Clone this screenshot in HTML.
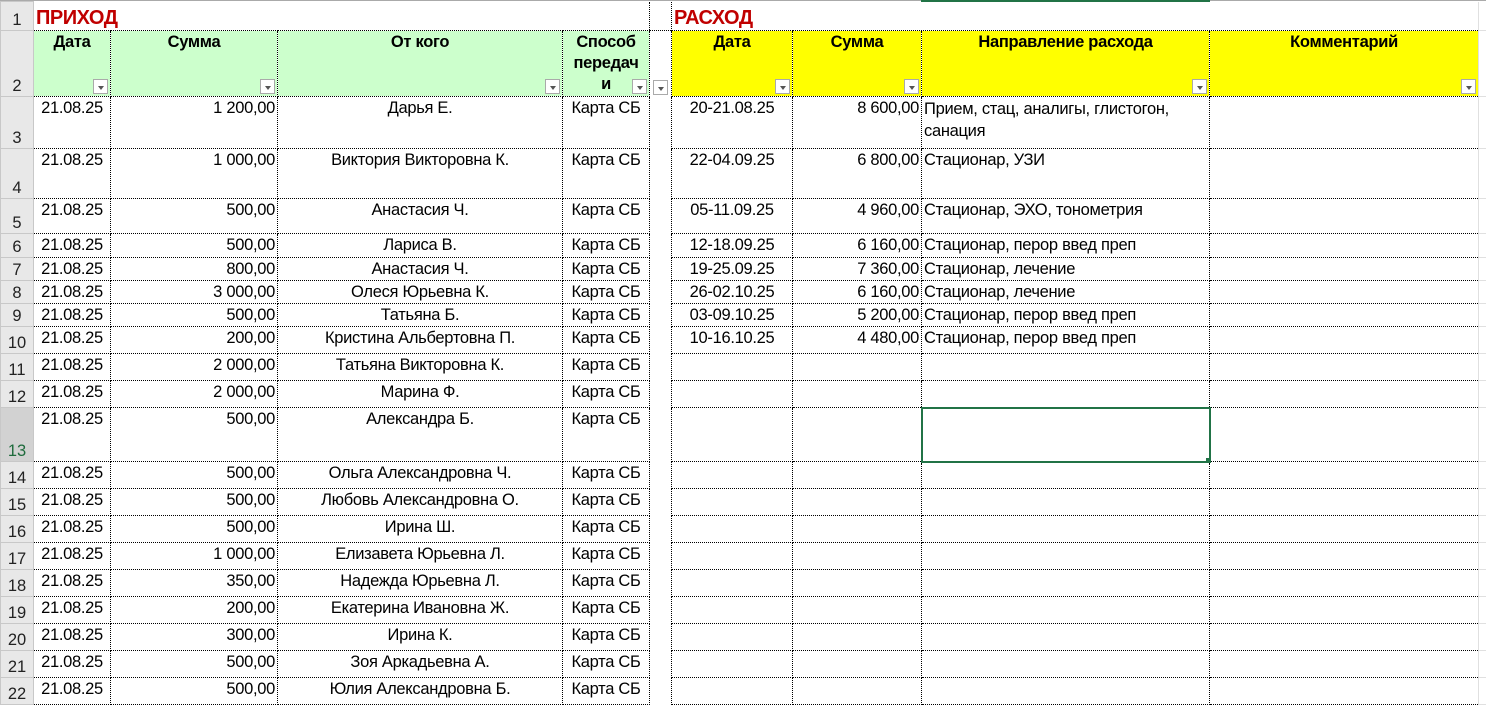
<!DOCTYPE html>
<html><head><meta charset="utf-8"><style>
body{margin:0;background:#fff;width:1486px;height:683px;overflow:hidden;position:relative;font-family:"Liberation Sans",Arial,sans-serif;font-size:16.5px;color:#000}
table{border-collapse:collapse;table-layout:fixed;position:absolute;left:0;top:1px;width:1486px}
td{padding:1px 2px 0 2px;vertical-align:top;white-space:nowrap;overflow:hidden;border:1px dotted #000;line-height:20px;position:relative;letter-spacing:-0.3px}
td.rh{background:#e8e8e8;border:1px solid #c8c8c8;text-align:center;vertical-align:bottom;padding:0;color:#222;letter-spacing:0}
td.sel{background:#d2d2d2;color:#1e6b3c}
td.f{border-top:none;border-bottom:none;border-right:none}
td.e{border:1px solid #e0e0e0}
td.c{text-align:center}td.r{text-align:right}
tr.h td{font-weight:bold;text-align:center}
.g{background:#ccffcc}.y{background:#ffff00}
.fb{position:absolute;right:2px;bottom:2px;width:15px;height:15px;background:#fff;border:1px solid #aaa;box-sizing:border-box}
.fb:after{content:"";position:absolute;left:4px;top:6px;border-left:3px solid transparent;border-right:3px solid transparent;border-top:4px solid #555}
.t{color:#c00000;font-weight:bold;font-size:20px;letter-spacing:-0.5px}
td.n1{border-top:none;border-right:none;border-left:none;vertical-align:bottom;padding-bottom:1px}
</style></head><body>
<div style="position:absolute;left:0;top:0;width:1486px;height:1px;background:#aaa"></div>
<div style="position:absolute;left:921px;top:0;width:289px;height:2px;background:#217346;z-index:2"></div>
<table>
<colgroup><col style="width:33px"><col style="width:77px"><col style="width:167px"><col style="width:285px"><col style="width:87px"><col style="width:22px"><col style="width:121px"><col style="width:129px"><col style="width:288px"><col style="width:269px"><col style="width:8px"></colgroup>
<tr style="height:29px"><td class="rh">1</td><td class="n1" colspan="4" style="border-bottom:1px dotted #000"><span class="t">ПРИХОД</span></td><td class="f"></td><td class="n1" colspan="4" style="border-left:1px dotted #000"><span class="t">РАСХОД</span></td><td class="e" style="border-top:none"></td></tr>
<tr class="h" style="height:66px"><td class="rh" style="font-weight:normal">2</td>
<td class="g">Дата<span class="fb"></span></td><td class="g">Сумма<span class="fb"></span></td><td class="g">От кого<span class="fb"></span></td><td class="g" style="line-height:21px">Способ<br>передач<br>и<span class="fb"></span></td><td class="f" style="border-top:1px dotted #000"><span class="fb" style="right:3px"></span></td>
<td class="y">Дата<span class="fb"></span></td><td class="y">Сумма<span class="fb"></span></td><td class="y">Направление расхода<span class="fb"></span></td><td class="y">Комментарий<span class="fb"></span></td><td class="e"></td></tr>
<tr style="height:52px"><td class="rh">3</td><td class="c">21.08.25</td><td class="r">1 200,00</td><td class="c">Дарья Е.</td><td class="c">Карта СБ</td><td class="f"></td><td class="c">20-21.08.25</td><td class="r">8 600,00</td><td style="white-space:normal;line-height:22px">Прием, стац, аналигы, глистогон, санация</td><td></td><td class="e"></td></tr>
<tr style="height:50px"><td class="rh">4</td><td class="c">21.08.25</td><td class="r">1 000,00</td><td class="c">Виктория Викторовна К.</td><td class="c">Карта СБ</td><td class="f"></td><td class="c">22-04.09.25</td><td class="r">6 800,00</td><td>Стационар, УЗИ</td><td></td><td class="e"></td></tr>
<tr style="height:35px"><td class="rh">5</td><td class="c">21.08.25</td><td class="r">500,00</td><td class="c">Анастасия Ч.</td><td class="c">Карта СБ</td><td class="f"></td><td class="c">05-11.09.25</td><td class="r">4 960,00</td><td>Стационар, ЭХО, тонометрия</td><td></td><td class="e"></td></tr>
<tr style="height:24px"><td class="rh">6</td><td class="c">21.08.25</td><td class="r">500,00</td><td class="c">Лариса В.</td><td class="c">Карта СБ</td><td class="f"></td><td class="c">12-18.09.25</td><td class="r">6 160,00</td><td>Стационар, перор введ преп</td><td></td><td class="e"></td></tr>
<tr style="height:23px"><td class="rh">7</td><td class="c">21.08.25</td><td class="r">800,00</td><td class="c">Анастасия Ч.</td><td class="c">Карта СБ</td><td class="f"></td><td class="c">19-25.09.25</td><td class="r">7 360,00</td><td>Стационар, лечение</td><td></td><td class="e"></td></tr>
<tr style="height:23px"><td class="rh">8</td><td class="c">21.08.25</td><td class="r">3 000,00</td><td class="c">Олеся Юрьевна К.</td><td class="c">Карта СБ</td><td class="f"></td><td class="c">26-02.10.25</td><td class="r">6 160,00</td><td>Стационар, лечение</td><td></td><td class="e"></td></tr>
<tr style="height:23px"><td class="rh">9</td><td class="c">21.08.25</td><td class="r">500,00</td><td class="c">Татьяна Б.</td><td class="c">Карта СБ</td><td class="f"></td><td class="c">03-09.10.25</td><td class="r">5 200,00</td><td>Стационар, перор введ преп</td><td></td><td class="e"></td></tr>
<tr style="height:27px"><td class="rh">10</td><td class="c">21.08.25</td><td class="r">200,00</td><td class="c">Кристина Альбертовна П.</td><td class="c">Карта СБ</td><td class="f"></td><td class="c">10-16.10.25</td><td class="r">4 480,00</td><td>Стационар, перор введ преп</td><td></td><td class="e"></td></tr>
<tr style="height:27px"><td class="rh">11</td><td class="c">21.08.25</td><td class="r">2 000,00</td><td class="c">Татьяна Викторовна К.</td><td class="c">Карта СБ</td><td class="f"></td><td></td><td></td><td></td><td></td><td class="e"></td></tr>
<tr style="height:27px"><td class="rh">12</td><td class="c">21.08.25</td><td class="r">2 000,00</td><td class="c">Марина Ф.</td><td class="c">Карта СБ</td><td class="f"></td><td></td><td></td><td></td><td></td><td class="e"></td></tr>
<tr style="height:54px"><td class="rh sel">13</td><td class="c">21.08.25</td><td class="r">500,00</td><td class="c">Александра Б.</td><td class="c">Карта СБ</td><td class="f"></td><td></td><td></td><td style="border:2px solid #217346"><span style="position:absolute;right:-3px;bottom:-3px;width:5px;height:5px;background:#217346;border:1px solid #fff"></span></td><td></td><td class="e"></td></tr>
<tr style="height:27px"><td class="rh">14</td><td class="c">21.08.25</td><td class="r">500,00</td><td class="c">Ольга Александровна Ч.</td><td class="c">Карта СБ</td><td class="f"></td><td></td><td></td><td></td><td></td><td class="e"></td></tr>
<tr style="height:27px"><td class="rh">15</td><td class="c">21.08.25</td><td class="r">500,00</td><td class="c">Любовь Александровна О.</td><td class="c">Карта СБ</td><td class="f"></td><td></td><td></td><td></td><td></td><td class="e"></td></tr>
<tr style="height:27px"><td class="rh">16</td><td class="c">21.08.25</td><td class="r">500,00</td><td class="c">Ирина Ш.</td><td class="c">Карта СБ</td><td class="f"></td><td></td><td></td><td></td><td></td><td class="e"></td></tr>
<tr style="height:27px"><td class="rh">17</td><td class="c">21.08.25</td><td class="r">1 000,00</td><td class="c">Елизавета Юрьевна Л.</td><td class="c">Карта СБ</td><td class="f"></td><td></td><td></td><td></td><td></td><td class="e"></td></tr>
<tr style="height:27px"><td class="rh">18</td><td class="c">21.08.25</td><td class="r">350,00</td><td class="c">Надежда Юрьевна Л.</td><td class="c">Карта СБ</td><td class="f"></td><td></td><td></td><td></td><td></td><td class="e"></td></tr>
<tr style="height:27px"><td class="rh">19</td><td class="c">21.08.25</td><td class="r">200,00</td><td class="c">Екатерина Ивановна Ж.</td><td class="c">Карта СБ</td><td class="f"></td><td></td><td></td><td></td><td></td><td class="e"></td></tr>
<tr style="height:27px"><td class="rh">20</td><td class="c">21.08.25</td><td class="r">300,00</td><td class="c">Ирина К.</td><td class="c">Карта СБ</td><td class="f"></td><td></td><td></td><td></td><td></td><td class="e"></td></tr>
<tr style="height:27px"><td class="rh">21</td><td class="c">21.08.25</td><td class="r">500,00</td><td class="c">Зоя Аркадьевна А.</td><td class="c">Карта СБ</td><td class="f"></td><td></td><td></td><td></td><td></td><td class="e"></td></tr>
<tr style="height:27px"><td class="rh">22</td><td class="c">21.08.25</td><td class="r">500,00</td><td class="c">Юлия Александровна Б.</td><td class="c">Карта СБ</td><td class="f"></td><td></td><td></td><td></td><td></td><td class="e"></td></tr>
</table>
</body></html>
